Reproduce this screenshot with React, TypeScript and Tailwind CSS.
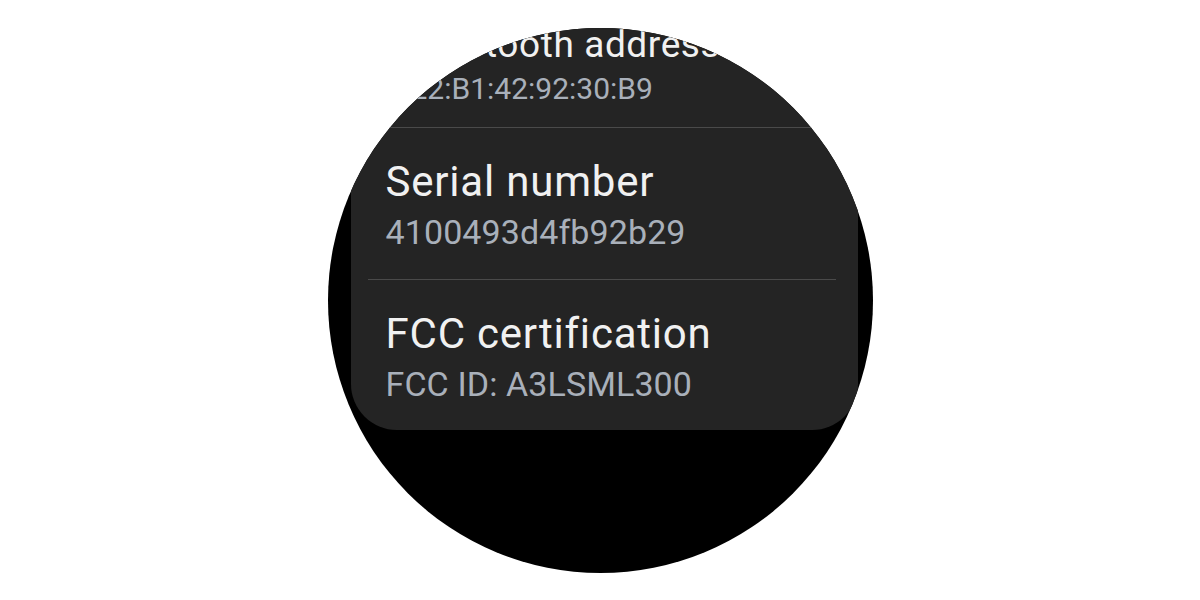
import React from 'react';

type Row = { title: string; value: string };

const rows: Row[] = [
  { title: 'Serial number', value: '4100493d4fb92b29' },
  { title: 'FCC certification', value: 'FCC ID: A3LSML300' },
];

const Divider: React.FC = () => (
  <div className="h-px bg-[#4a4a4a] ml-[17px] mr-[22px]" />
);

const InfoRow: React.FC<Row & { last?: boolean }> = ({ title, value, last }) => (
  <div className={`pl-[35px] pt-[30px] ${last ? 'pb-[26px]' : 'pb-[27px]'}`}>
    <p className="text-[42px] leading-[48px] tracking-[0.8px] text-[#f1f1f1] whitespace-nowrap">{title}</p>
    <p className="mt-[6px] text-[34px] leading-[40px] tracking-[0.1px] text-[#a9b0ba] whitespace-nowrap">{value}</p>
  </div>
);

export default function App() {
  return (
    <div className="h-[600px] w-full bg-white flex justify-center" style={{ fontFamily: 'Roboto, "Noto Sans", sans-serif' }}>
      <div className="mt-[28px] w-[545px] h-[545px] rounded-full bg-black overflow-hidden shrink-0">
        <div className="mt-[-32px] ml-[23px] mr-[15px] bg-[#242424] rounded-[46px] flex flex-col">
          {/* scaled-down row near the top edge of the watch face */}
          <div className="pl-[60px] pt-[28px] pb-[21px]">
            <p className="text-[37px] leading-[42px] tracking-[0.6px] text-[#f1f1f1] whitespace-nowrap">Bluetooth address</p>
            <p className="mt-[5px] text-[30px] leading-[35px] text-[#a9b0ba] whitespace-nowrap">22:B1:42:92:30:B9</p>
          </div>
          <Divider />
          <InfoRow {...rows[0]} />
          <Divider />
          <InfoRow {...rows[1]} last />
        </div>
      </div>
    </div>
  );
}
